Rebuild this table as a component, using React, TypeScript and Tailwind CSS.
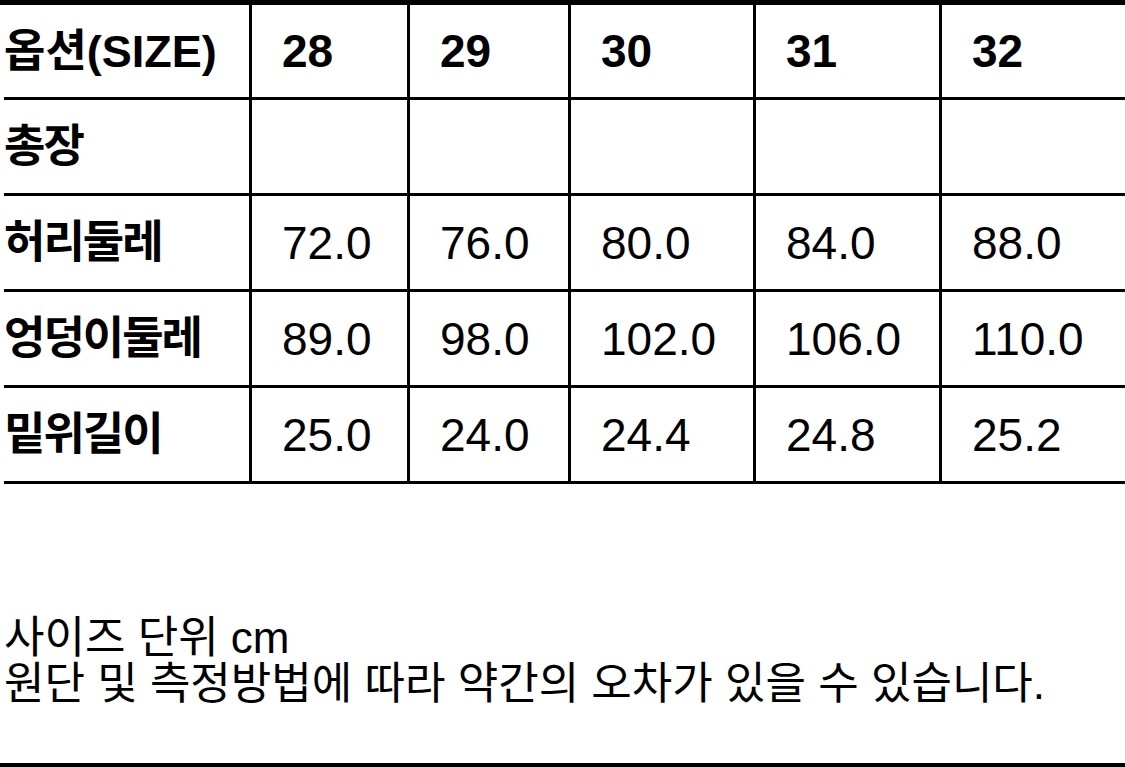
const font = { fontFamily: '"Liberation Sans", "Noto Sans CJK KR", sans-serif' }

const sizes = ['28', '29', '30', '31', '32']

const rows: { label: string; values: string[] }[] = [
  { label: '총장', values: ['', '', '', '', ''] },
  { label: '허리둘레', values: ['72.0', '76.0', '80.0', '84.0', '88.0'] },
  { label: '엉덩이둘레', values: ['89.0', '98.0', '102.0', '106.0', '110.0'] },
  { label: '밑위길이', values: ['25.0', '24.0', '24.4', '24.8', '25.2'] },
]

const cols = 'grid grid-cols-[245px_158px_161px_185px_186px_1fr]'

function Cell({ children, first, bold }: { children?: React.ReactNode; first?: boolean; bold?: boolean }) {
  return (
    <div
      className={
        'flex items-center ' +
        (first ? 'pl-0' : 'border-l-[3px] border-black pl-[30px] text-[46px]') +
        (bold ? ' font-bold' : '')
      }
    >
      {children}
    </div>
  )
}

export default function App() {
  return (
    <div className="flex h-[767px] w-[1125px] flex-col bg-white text-black" style={font}>
      <div className="h-[5px] w-full bg-black" />

      <div className="ml-[4px] text-[45px] leading-none">
        <div className={`${cols} h-[95px] border-b-[3px] border-black`}>
          <Cell first bold>
            옵션(SIZE)
          </Cell>
          {sizes.map((s) => (
            <Cell key={s} bold>
              {s}
            </Cell>
          ))}
        </div>
        {rows.map((r) => (
          <div key={r.label} className={`${cols} h-[96px] border-b-[3px] border-black`}>
            <Cell first bold>
              <span className="tracking-[-2px]">{r.label}</span>
            </Cell>
            {r.values.map((v, i) => (
              <Cell key={i}>{v}</Cell>
            ))}
          </div>
        ))}
      </div>

      <div className="mt-[131px] pl-[4px] text-[44px] leading-[46px]">
        <p>사이즈 단위 cm</p>
        <p>원단 및 측정방법에 따라 약간의 오차가 있을 수 있습니다.</p>
      </div>

      <div className="flex-1" />
      <div className="h-[4px] w-full bg-black" />
    </div>
  )
}
